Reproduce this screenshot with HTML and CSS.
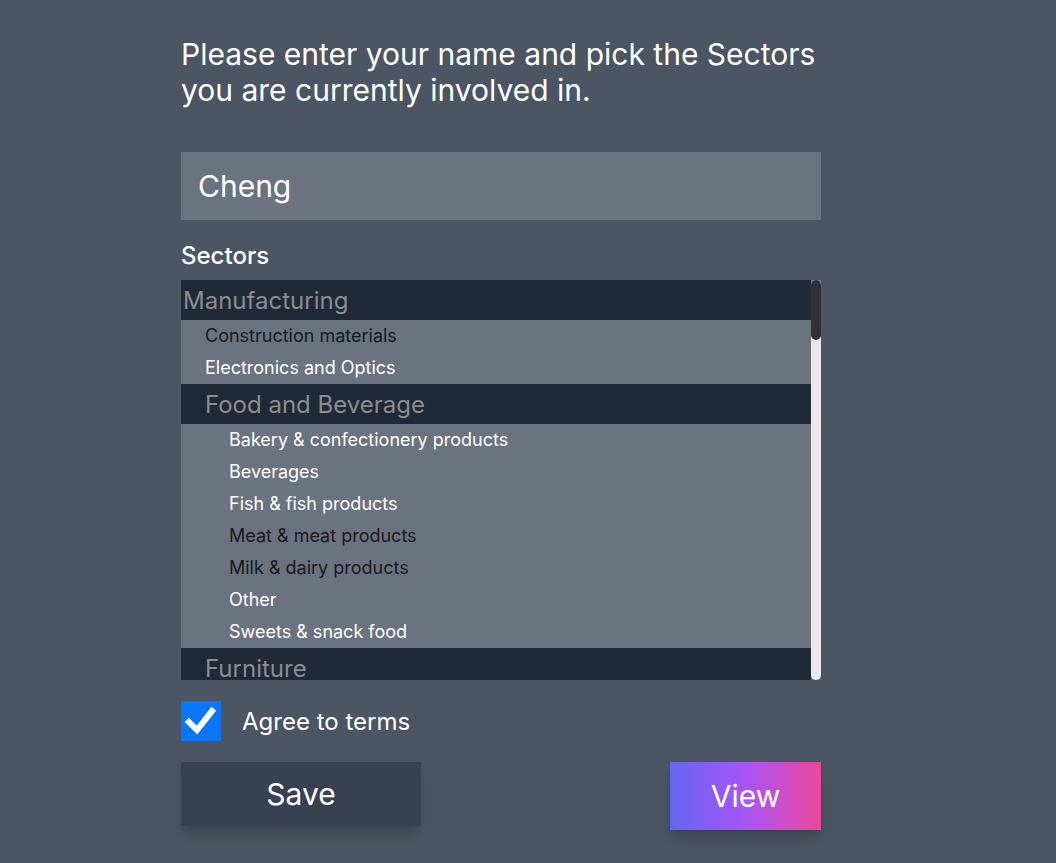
FILE: index.html
```html
<!DOCTYPE html>
<html lang="en">
<head>
<meta charset="utf-8">
<title>Sectors</title>
<link rel="stylesheet" href="styles.css">
</head>
<body>
<main class="page">
  <form class="form">
    <h1 class="title">Please enter your name and pick the Sectors you are currently involved in.</h1>
    <div class="name-input">Cheng</div>
    <label class="label">Sectors</label>
    <div class="select">
      <div class="list">
        <div class="group">Manufacturing</div>
        <div class="opt l1 dark">Construction materials</div>
        <div class="opt l1">Electronics and Optics</div>
        <div class="group l1">Food and Beverage</div>
        <div class="opt l2">Bakery &amp; confectionery products</div>
        <div class="opt l2">Beverages</div>
        <div class="opt l2">Fish &amp; fish products</div>
        <div class="opt l2 dark">Meat &amp; meat products</div>
        <div class="opt l2 dark">Milk &amp; dairy products</div>
        <div class="opt l2">Other</div>
        <div class="opt l2">Sweets &amp; snack food</div>
        <div class="group l1">Furniture</div>
      </div>
      <div class="scrollbar"><div class="thumb"></div></div>
    </div>
    <div class="terms">
      <span class="checkbox">
        <svg width="40" height="40" viewBox="0 0 40 40"><path d="M8 21 L16 29 L31 10" fill="none" stroke="#fff" stroke-width="6" stroke-linecap="square" stroke-linejoin="miter"/></svg>
      </span>
      <span class="terms-text">Agree to terms</span>
    </div>
    <div class="buttons">
      <button type="button" class="btn save">Save</button>
      <button type="button" class="btn view">View</button>
    </div>
  </form>
</main>
</body>
</html>
```
FILE: styles.css
```css
* { box-sizing: border-box; }
html, body { margin: 0; padding: 0; }
body {
  background: #4b5563;
  font-family: Inter, "Noto Sans", sans-serif;
  color: #fff;
  min-height: 863px;
}
.page {
  padding: 36px 0 0 181px;
}
.form {
  width: 640px;
  display: flex;
  flex-direction: column;
}
.title {
  margin: 0;
  font-size: 30px;
  line-height: 36px;
  font-weight: 400;
  color: #fff;
}
.name-input {
  margin-top: 44px;
  background: #6b7280;
  height: 68px;
  padding: 16px 17px;
  font-size: 30px;
  line-height: 36px;
  color: #fff;
}
.label {
  margin-top: 22px;
  font-size: 24px;
  line-height: 28px;
  font-weight: 500;
}
.select {
  margin-top: 10px;
  height: 400px;
  display: flex;
  overflow: hidden;
  background: #6b7280;
}
.list {
  flex: 1;
  overflow: hidden;
}
.group {
  background: #1f2937;
  color: #8b8d91;
  height: 40px;
  line-height: 41px;
  font-size: 24px;
  padding-left: 2px;
  white-space: nowrap;
}
.group.l1 { padding-left: 24px; }
.opt {
  height: 32px;
  line-height: 32px;
  font-size: 18px;
  color: #fff;
  padding-left: 24px;
  white-space: nowrap;
}
.opt.l2 { padding-left: 48px; }
.opt.dark { color: #181a1f; }
.scrollbar {
  width: 10px;
  background: #e9e9eb;
  border-radius: 5px;
  flex: none;
}
.thumb {
  height: 60px;
  background: #303133;
  border-radius: 5px;
}
.terms {
  margin-top: 21px;
  display: flex;
  align-items: center;
  gap: 21px;
  height: 40px;
}
.checkbox {
  width: 40px;
  height: 40px;
  background: #0b76f8;
  display: block;
}
.checkbox svg { display: block; }
.terms-text {
  font-size: 24px;
  line-height: 28px;
  padding-top: 1px;
}
.buttons {
  margin-top: 21px;
  display: flex;
  justify-content: space-between;
  align-items: flex-start;
}
.btn {
  border: none;
  font-family: Inter, "Noto Sans", sans-serif;
  font-size: 30px;
  color: #fff;
  padding: 0;
  box-shadow: 0 10px 15px -3px rgba(0,0,0,0.18), 0 4px 6px -4px rgba(0,0,0,0.18);
}
.save {
  width: 240px;
  height: 64px;
  background: #374151;
}
.view {
  width: 151px;
  height: 68px;
  background: linear-gradient(to right, #6366f1, #a855f7, #ec4899);
}
```
